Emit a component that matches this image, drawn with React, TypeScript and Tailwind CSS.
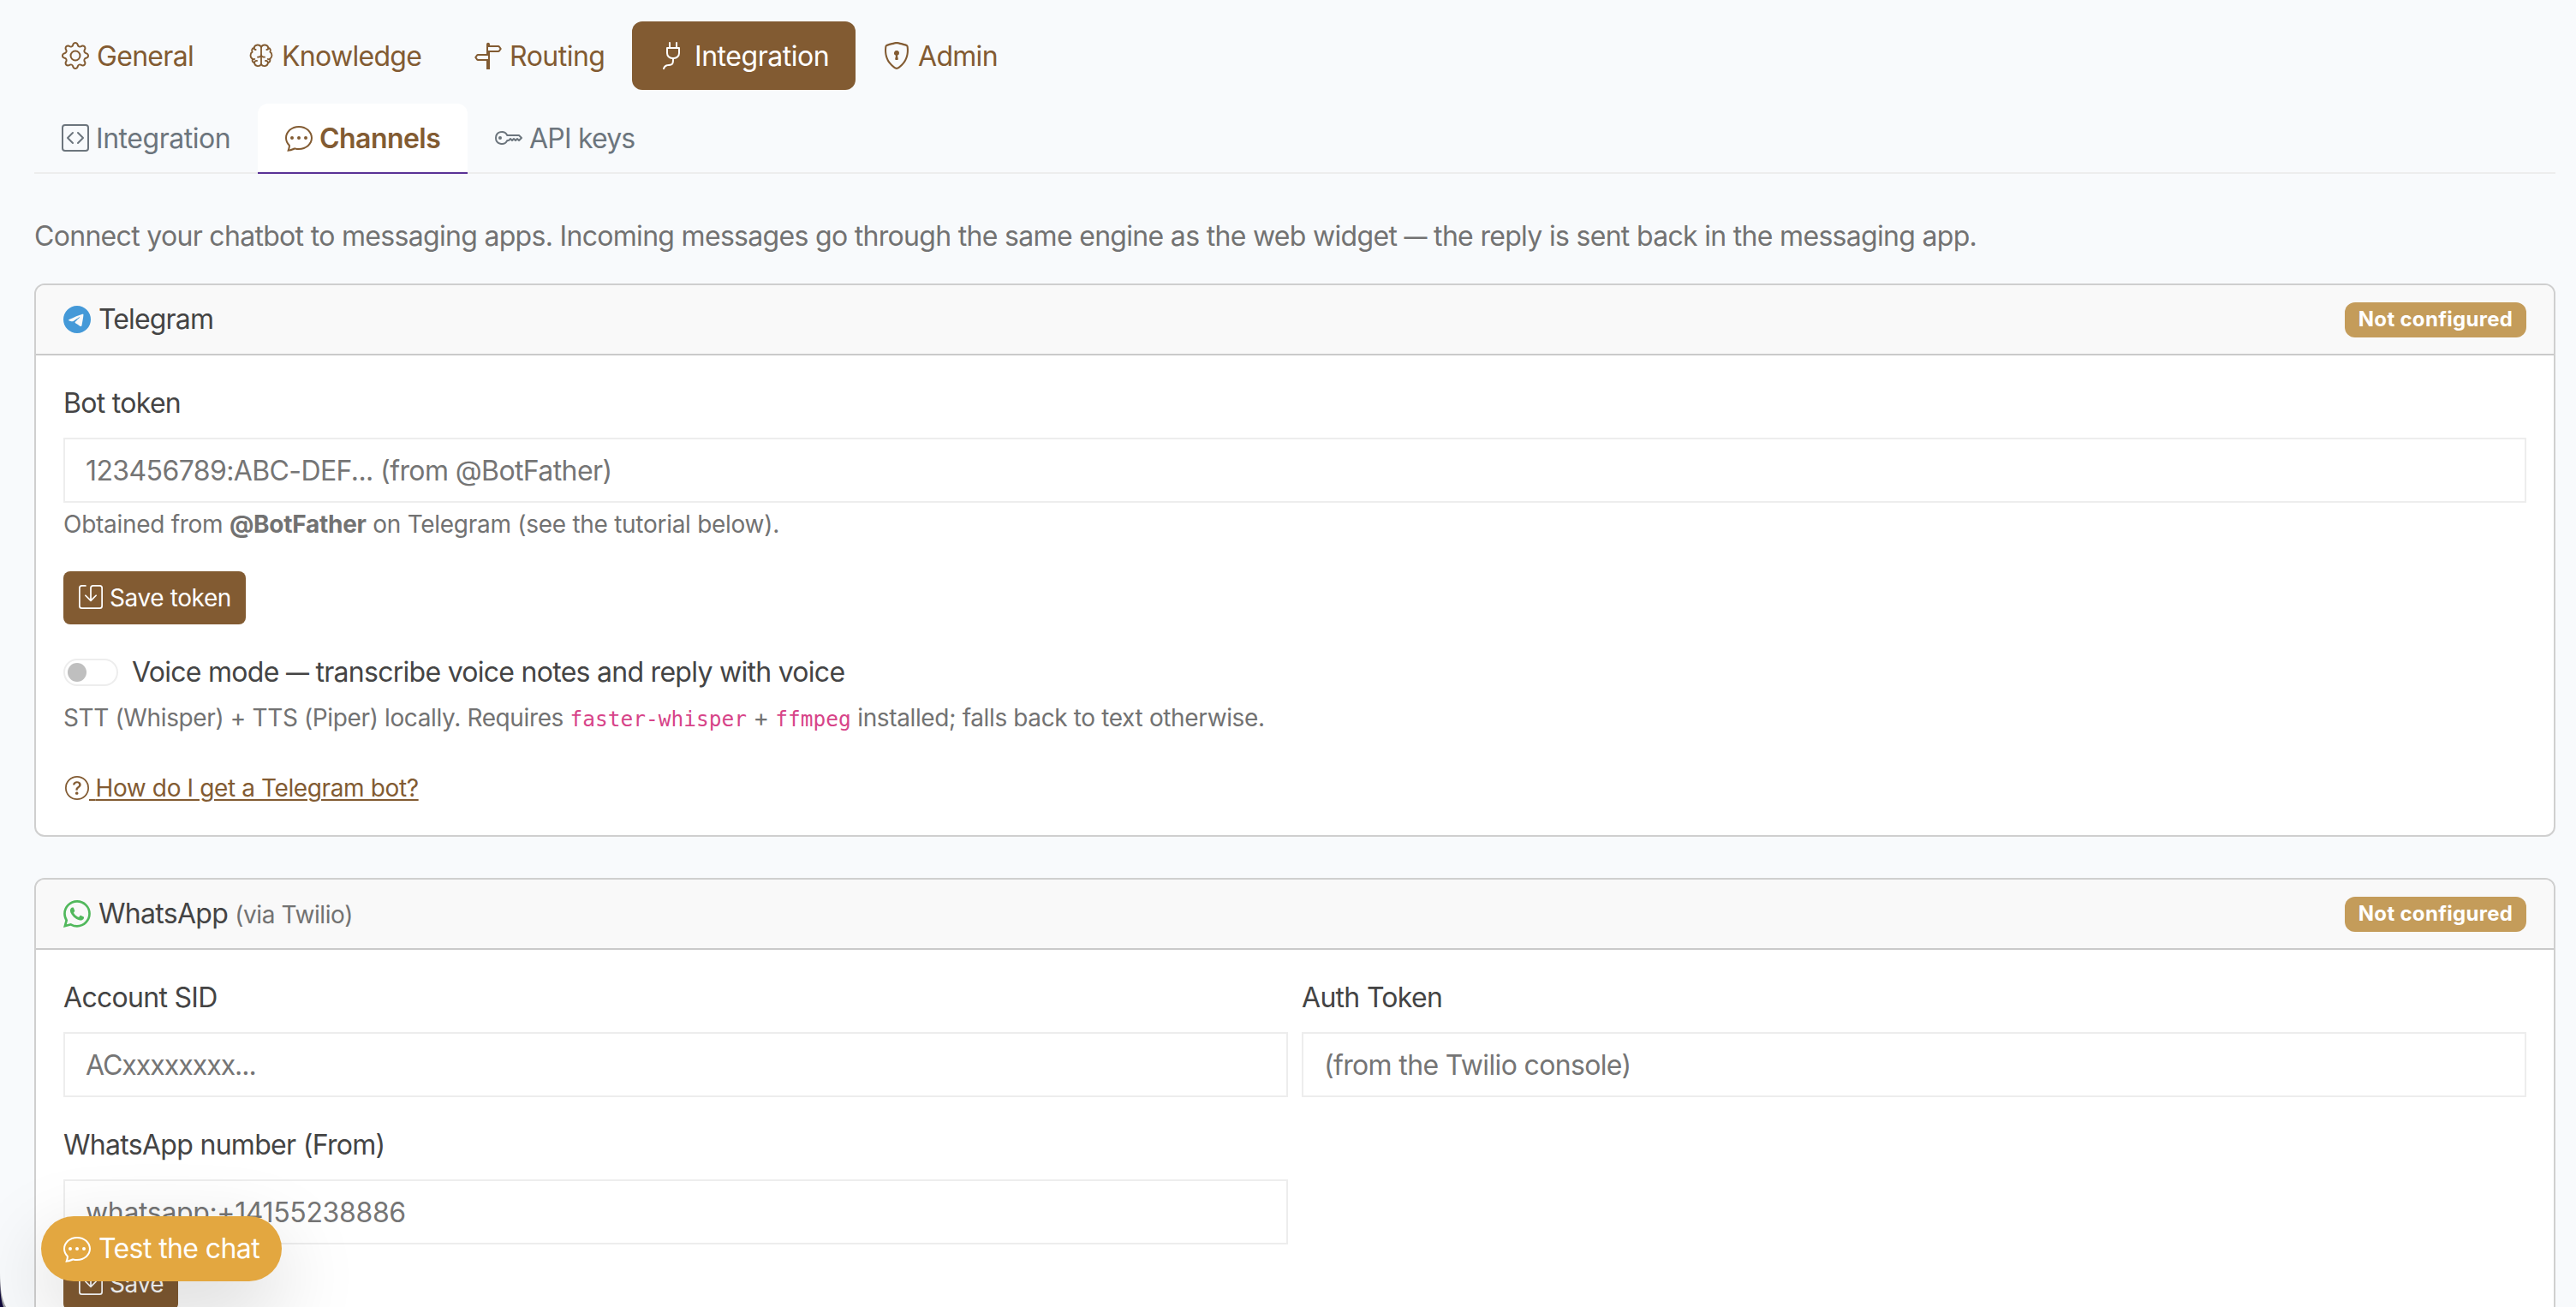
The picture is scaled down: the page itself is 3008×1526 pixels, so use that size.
import { FC, ReactNode } from "react";
import {
  BsChatDots,
  BsCodeSquare,
  BsGear,
  BsKey,
  BsPlug,
  BsQuestionCircle,
  BsSave,
  BsShieldLock,
  BsSignpostSplit,
  BsTelegram,
  BsWhatsapp,
} from "react-icons/bs";

type TabType = {
  label: string;
  icon: ReactNode;
  active?: boolean;
  textClass: string;
};

const BrainHalf = () => (
  <>
    <path d="M75 45C70 34 52 35 50 48C42 49 41 57 44 62C36 66 35 81 44 86C43 94 46 99 51 100C53 114 70 114 75 105" />
    <path d="M50 48C50 52 52 54 56 54M44 86C46 88 49 88 52 87M51 100C52 95 55 92 60 93" />
    <path d="M63 80C70 80 74 78 75 73" />
  </>
);

const BrainIcon = () => (
  <svg
    viewBox="24 27 96 96"
    width="1em"
    height="1em"
    fill="none"
    stroke="currentColor"
    strokeWidth="5.5"
    strokeLinecap="round"
    strokeLinejoin="round"
  >
    <BrainHalf />
    <g transform="translate(150 0) scale(-1 1)">
      <BrainHalf />
    </g>
    <path d="M75 45V105" />
  </svg>
);

const mainTabs: TabType[] = [
  { label: "General", icon: <BsGear />, textClass: "w-[112px]" },
  { label: "Knowledge", icon: <BrainIcon />, textClass: "w-[162px]" },
  { label: "Routing", icon: <BsSignpostSplit />, textClass: "w-[112px] tracking-[-0.5px]" },
  { label: "Integration", icon: <BsPlug />, active: true, textClass: "w-[157px] tracking-[-0.45px]" },
  { label: "Admin", icon: <BsShieldLock />, textClass: "w-[93px]" },
];

const subTabs: TabType[] = [
  { label: "Integration", icon: <BsCodeSquare />, textClass: "w-[157px] tracking-[-0.45px]" },
  { label: "Channels", icon: <BsChatDots />, active: true, textClass: "w-[141px] tracking-[-0.55px]" },
  { label: "API keys", icon: <BsKey />, textClass: "w-[123px] tracking-[-0.8px]" },
];

const MainTab: FC<TabType> = ({ label, icon, active, textClass }) => (
  <button
    className={`flex h-20 items-center rounded-xl px-8 ${
      active ? "bg-[#825b32] text-white" : "text-[#825b32]"
    }`}
  >
    {icon}
    <span className={`ml-[9px] -mr-px pt-px text-left whitespace-nowrap ${textClass}`}>
      {label}
    </span>
  </button>
);

const SubTab: FC<TabType> = ({ label, icon, active, textClass }) => (
  <button
    className={`-mb-0.5 flex h-[82px] items-center rounded-t-xl border-b-2 px-8 ${
      active
        ? "border-[#593196] bg-white font-semibold text-[#825b32]"
        : "border-transparent text-[#6c757d]"
    }`}
  >
    {icon}
    <span className={`ml-2 pt-px text-left whitespace-nowrap ${textClass}`}>{label}</span>
  </button>
);

type CardType = {
  header: ReactNode;
  children: ReactNode;
};

const ChannelCard: FC<CardType> = ({ header, children }) => (
  <div className="mb-12 rounded-xl border-2 border-[#cfcfcf] bg-white">
    <div className="flex h-[82px] items-center justify-between rounded-t-[10px] border-b-2 border-[#cacaca] bg-[#f9f9f9] px-8">
      <div className="flex items-center">{header}</div>
      <span className="flex h-[41px] w-[212px] items-center justify-center rounded-xl bg-[#c49c5a] text-[24px] font-bold tracking-[0.3px] whitespace-nowrap text-white">
        Not configured
      </span>
    </div>
    <div className="p-8">{children}</div>
  </div>
);

type FieldType = {
  id: string;
  title: string;
  placeholder: string;
  className?: string;
};

const Field: FC<FieldType> = ({ id, title, placeholder, className = "tracking-[-0.65px]" }) => (
  <div>
    <label htmlFor={id} className="mb-4 block">
      {title}
    </label>
    <input
      id={id}
      type="text"
      placeholder={placeholder}
      className={`block h-[76px] w-full border-2 border-[#ededed] bg-white px-6 outline-none placeholder:text-[#757575] ${className}`}
    />
  </div>
);

const SaveButton: FC<{ label: string; className: string }> = ({ label, className }) => (
  <button
    className={`flex h-[62px] items-center rounded-lg bg-[#825b32] pl-[18px] text-[28px] tracking-[-0.4px] whitespace-nowrap text-white ${className}`}
  >
    <BsSave className="mr-2 mb-0.5 shrink-0" />
    {label}
  </button>
);

const Code: FC<{ children: ReactNode }> = ({ children }) => (
  <code className="font-['DejaVu_Sans_Mono'] text-[24.5px] leading-none tracking-normal text-[#d74489]">
    {children}
  </code>
);

const Dash = () => (
  <span className="relative -top-px text-[27px] leading-none font-medium">—</span>
);

export default function App() {
  return (
    <div className="relative h-[1526px] w-full overflow-hidden bg-slate-50 pr-6 pl-10 font-['Inter',sans-serif] text-[32px] leading-[48px] tracking-[-0.7px] text-[#444]">
      <nav className="flex pt-[25px]">
        {mainTabs.map((tab) => (
          <MainTab key={tab.label} {...tab} />
        ))}
      </nav>
      <nav className="mt-4 flex h-[82px] border-b-2 border-[#ededed]">
        {subTabs.map((tab) => (
          <SubTab key={tab.label} {...tab} />
        ))}
      </nav>

      <p className="mt-[49px] mb-[31px] h-12 tracking-[-0.69px] text-[#727272]">
        Connect your chatbot to messaging apps. Incoming messages go through the same engine as the
        web widget <Dash /> the reply is sent back in the messaging app.
      </p>

      <ChannelCard
        header={
          <>
            <BsTelegram className="mr-[9px] text-[#4499d8]" />
            <span className="tracking-[-0.85px]">Telegram</span>
          </>
        }
      >
        <Field id="bot-token" title="Bot token" placeholder="123456789:ABC-DEF... (from @BotFather)" className="tracking-[-0.6px]" />
        <p className="mt-1 text-[28px] leading-[42px] tracking-[-0.28px] text-[#727272]">
          Obtained from <b>@BotFather</b> on Telegram (see the tutorial below).
        </p>
        <SaveButton label="Save token" className="mt-[34px] w-[213px]" />
        <div className="mt-8 flex items-center">
          <span className="flex h-8 w-16 items-center rounded-full border-2 border-[#ededed] pl-[3px]">
            <span className="h-[22px] w-[22px] rounded-full bg-[#bfbfbf]" />
          </span>
          <span className="ml-4 tracking-[-0.72px]">
            Voice mode <Dash /> transcribe voice notes and reply with voice
          </span>
        </div>
        <p className="mt-2 h-[42px] text-[28px] leading-[42px] tracking-[-0.37px] text-[#727272]">
          STT (Whisper) + TTS (Piper) locally. Requires <Code>faster-whisper</Code> +{" "}
          <Code>ffmpeg</Code> installed; falls back to text otherwise.
        </p>
        <a className="mt-[37px] flex h-[47px] items-center text-[28px] tracking-[-0.38px] text-[#825b32]">
          <BsQuestionCircle className="ml-0.5 shrink-0" />
          <span className="whitespace-pre underline decoration-2 underline-offset-[3px]">
            {" "}
            How do I get a Telegram bot?
          </span>
        </a>
      </ChannelCard>

      <ChannelCard
        header={
          <>
            <BsWhatsapp className="mr-[9px] text-[#51b85c]" />
            WhatsApp
            <span className="ml-2 pt-px text-[28px] tracking-[-0.4px] text-[#727272]">
              (via Twilio)
            </span>
          </>
        }
      >
        <div className="grid grid-cols-2 gap-x-4 gap-y-8">
          <Field
            id="account-sid"
            title="Account SID"
            placeholder="ACxxxxxxxx..."
            className="tracking-[-1px]"
          />
          <Field id="auth-token" title="Auth Token" placeholder="(from the Twilio console)" />
          <Field
            id="whatsapp-from"
            title="WhatsApp number (From)"
            placeholder="whatsapp:+14155238886"
            className="tracking-[-0.35px]"
          />
        </div>
        <SaveButton label="Save" className="mt-[15px] w-[134px]" />
      </ChannelCard>

      {/* floating chat launcher */}
      <button className="absolute top-[1420px] left-12 flex h-[76px] w-[281px] items-center rounded-full bg-[#e3a740] pl-[26px] tracking-[-0.6px] whitespace-nowrap text-white shadow-[0_32px_96px_rgba(0,0,0,0.175)]">
        <BsChatDots className="mr-[9px]" />
        Test the chat
      </button>

      {/* rounded window corner */}
      <svg className="absolute bottom-0 left-0" width="8" height="40" viewBox="0 0 8 40">
        <path d="M0 0C0 18 2 31 7 40H0Z" fill="#9b9b9f" />
        <path d="M0 4C0 20 1 32 4 40H0Z" fill="#0d0638" />
      </svg>
    </div>
  );
}
